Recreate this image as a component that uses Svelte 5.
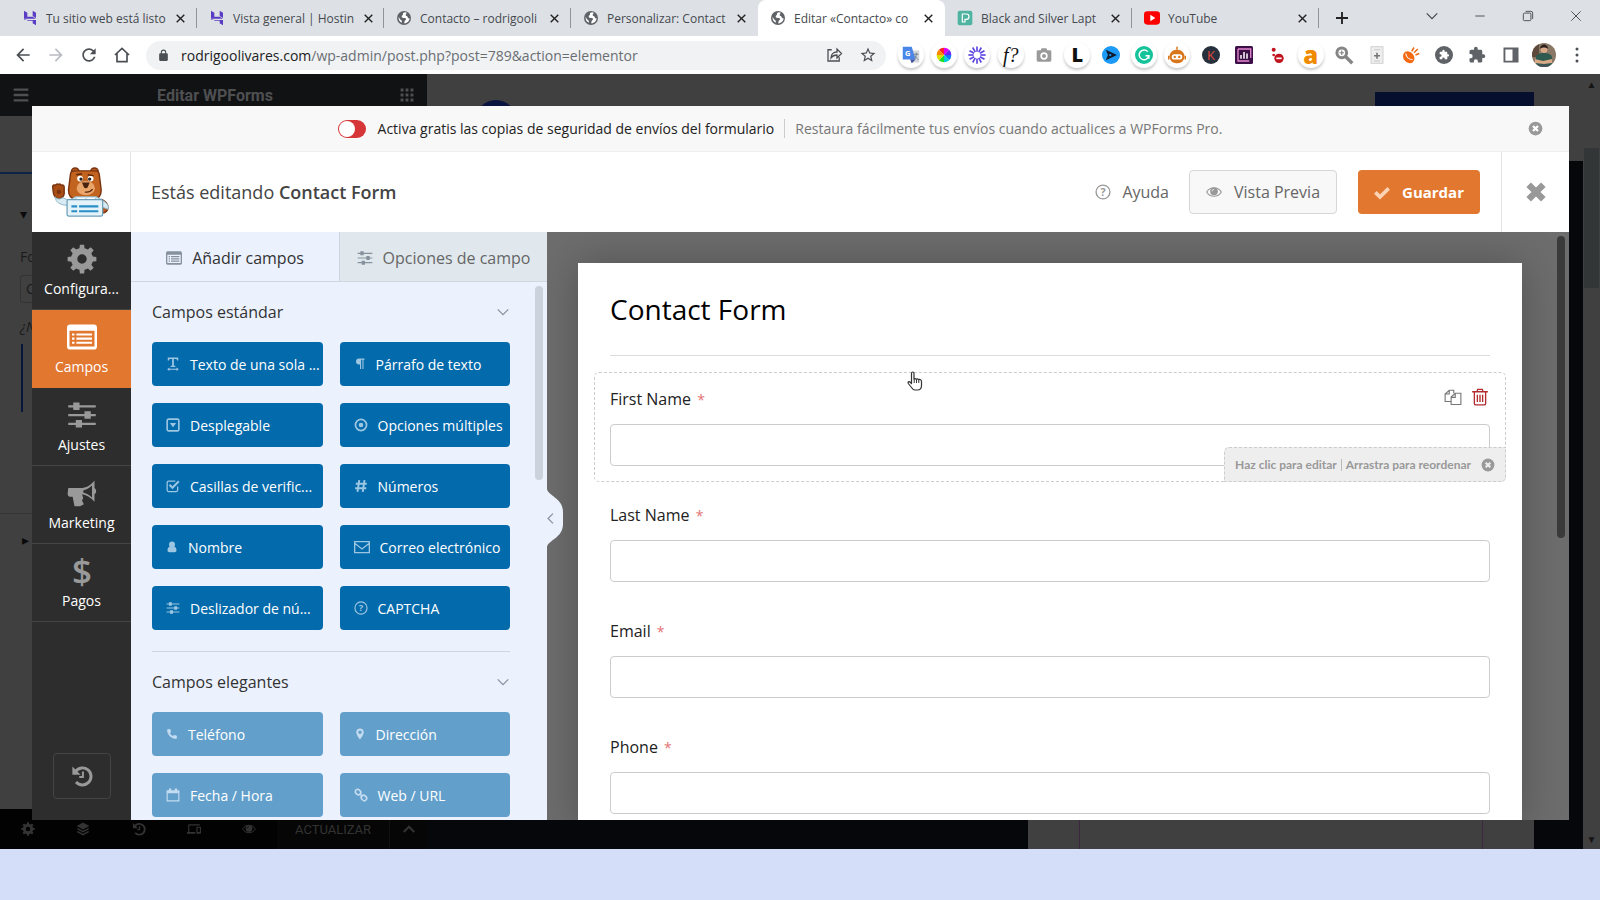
<!--
  Browser window with the Elementor editor in the back and the WPForms builder open on top
-->
<script>
  const spokes = (n, shape) =>
    Array.from({ length: n }, (_, i) => `<g transform="rotate(${(360 / n) * i} 12 12)">${shape}</g>`).join("");

  const sliders =
    '<path d="M1 5h22M1 12h22M1 19h22" stroke="currentColor" stroke-width="1.8"/><path d="M5 2h5v6H5zM14 9h5v6h-5zM7 16h5v6H7z"/>';
  const badgeClose =
    '<circle cx="12" cy="12" r="11"/><path d="M8 8l8 8M16 8l-8 8" stroke="var(--hole)" stroke-width="3.6"/>';
  const help =
    '<circle cx="12" cy="12" r="10.4" fill="none" stroke="currentColor" stroke-width="2"/><text x="12" y="17.5" text-anchor="middle" font-size="16" font-weight="700">?</text>';

  const icons = {
    hostinger:
      '<path fill="#5b3cc4" d="M3 1l5 3v6h8l5 3H3zM16 1l5 3v8l-5-3zM3 15h18v8l-5-3v-4H8v4l-5 3zM3 14v9l5-3v-5z"/>',
    globe:
      '<circle cx="12" cy="12" r="10.5"/><path fill="var(--hole)" d="M14 3.500c-3 0-4 1.500-3.500 3 .5 1.500-2 1.500-2 3.500s3 1.500 5 2 2 2.500.5 3.500-1 3-2 4.500c5 .5 8-3.500 8.500-7.500-1.500.5-3-.5-3-2s-3-1-3-3 1.500-2 1.500-3.500zM4 10c-.8 4 1.500 7.500 4.500 9.200.5-1.700.5-3-1-4.200S5 12.500 4 10z"/>',
    pexels:
      '<rect x="1" y="1" width="22" height="22" rx="3" fill="#4fb3a1"/><path d="M8 6h6a4 4 0 0 1 0 8h-2v4H8z" fill="none" stroke="#fff" stroke-width="1.800"/>',
    youtube: '<rect x="0" y="2" width="24" height="20" rx="5" fill="#f00"/><path fill="#fff" d="M9.500 7l7.500 5-7.500 5z"/>',
    close: '<path d="M5 5l14 14M19 5L5 19" fill="none" stroke="currentColor" stroke-width="2.600"/>',
    thinClose: '<path d="M4 4l16 16M20 4L4 20" fill="none" stroke="currentColor" stroke-width="1.600"/>',
    fatClose: '<path d="M4 4l16 16M20 4L4 20" fill="none" stroke="currentColor" stroke-width="7"/>',
    plus: '<path d="M12 3v18M3 12h18" fill="none" stroke="currentColor" stroke-width="2.800"/>',
    minus: '<path d="M4 12h16" fill="none" stroke="currentColor" stroke-width="1.600"/>',
    restore:
      '<rect x="4" y="7" width="13" height="13" rx="2" fill="none" stroke="currentColor" stroke-width="1.600"/><path d="M8 4h9a3 3 0 0 1 3 3v10" fill="none" stroke="currentColor" stroke-width="1.600"/>',
    down: '<path d="M3 7.500l9 9 9-9" fill="none" stroke="currentColor" stroke-width="2"/>',
    up: '<path d="M3 17l9-9 9 9" fill="none" stroke="currentColor" stroke-width="3.500"/>',
    left: '<path d="M16.500 3l-9 9 9 9" fill="none" stroke="currentColor" stroke-width="2.200"/>',
    back: '<path d="M20 11H7.830l5.590-5.590L12 4l-8 8 8 8 1.410-1.410L7.830 13H20z"/>',
    forward: '<path d="M12 4l-1.410 1.410L16.170 11H4v2h12.170l-5.580 5.590L12 20l8-8z"/>',
    reload:
      '<path d="M17.650 6.350C16.200 4.900 14.210 4 12 4c-4.420 0-7.990 3.580-7.990 8s3.570 8 7.990 8c3.730 0 6.840-2.550 7.730-6h-2.080c-.82 2.330-3.040 4-5.650 4-3.310 0-6-2.690-6-6s2.690-6 6-6c1.660 0 3.140.69 4.220 1.780L13 11h7V4z"/>',
    home: '<path d="M3.500 12L12 4l8.500 8M6 10v10h12V10" fill="none" stroke="currentColor" stroke-width="2"/>',
    lock:
      '<path fill-rule="evenodd" d="M18 8h-1V6A5 5 0 0 0 7 6v2H6a2 2 0 0 0-2 2v10c0 1.100.9 2 2 2h12a2 2 0 0 0 2-2V10a2 2 0 0 0-2-2zM9 8V6a3 3 0 0 1 6 0v2z"/>',
    share:
      '<path d="M9 5H4v15h15v-5M8 16c0-5 3-8 8-8V4l6 6-6 6v-4c-4 0-6 1-8 4z" fill="none" stroke="currentColor" stroke-width="1.700"/>',
    star:
      '<path d="M22 9.240l-7.190-.62L12 2 9.190 8.630 2 9.240l5.460 4.730L5.820 21 12 17.270 18.180 21l-1.630-7.030zM12 15.400l-3.760 2.270 1-4.280-3.320-2.880 4.380-.38L12 6.100l1.710 4.040 4.380.38-3.320 2.880 1 4.280z"/>',
    translate:
      '<path d="M9 6h14v16H12z" fill="#d3d5d8"/><path d="M1 1h12l5 17H1z" fill="#4a86e8"/><path d="M11 18h7l-5 5z" fill="#3c50a8"/><text x="4" y="13" font-size="10" font-weight="700" fill="#fff">G</text><path d="M16 11h6M19 9v2c0 3-1 5-3 7M17 13c1 2 3 4 5 5" fill="none" stroke="#6b7d90" stroke-width="1.200"/>',
    wheel:
      '<g stroke="none"><path fill="#f22" d="M12 12V1a11 11 0 0 0-7.800 3.200z"/><path fill="#d0f" d="M12 12V1a11 11 0 0 1 7.800 3.200z"/><path fill="#62f" d="M12 12l7.800-7.800A11 11 0 0 1 23 12z"/><path fill="#17f" d="M12 12h11a11 11 0 0 1-3.200 7.800z"/><path fill="#0cd" d="M12 12l7.800 7.800A11 11 0 0 1 12 23z"/><path fill="#2d2" d="M12 12v11a11 11 0 0 1-7.800-3.200z"/><path fill="#dd0" d="M12 12l-7.800 7.800A11 11 0 0 1 1 12z"/><path fill="#f80" d="M12 12H1a11 11 0 0 1 3.200-7.800z"/></g>',
    burst: spokes(12, '<path d="M12 .500v7" stroke="#5a45e0" stroke-width="2.200"/>'),
    camera:
      '<path fill="#9a9a9a" fill-rule="evenodd" d="M8.500 2L7 5H3a2 2 0 0 0-2 2v13a2 2 0 0 0 2 2h18a2 2 0 0 0 2-2V7a2 2 0 0 0-2-2h-4l-1.500-3zM12 8a5.500 5.500 0 1 1 0 11 5.500 5.500 0 0 1 0-11z"/><circle cx="12" cy="13.500" r="3" fill="#9a9a9a"/>',
    play: '<circle cx="12" cy="12" r="12" fill="#1b9af7"/><path d="M5 5l15 7-15 7 3-7z" fill="#111a2b"/><circle cx="11" cy="12" r="1.500" fill="#1b9af7"/>',
    grammar:
      '<circle cx="12" cy="12" r="12" fill="#15c39a"/><path d="M17 7.500A6.500 6.500 0 1 0 18.500 13h-4.500M18.500 17v-4" fill="none" stroke="#fff" stroke-width="2"/>',
    robot:
      '<path d="M11 1h2v4h-2zM0 13h2v5H0zM22 13h2v5h-2z" fill="#d9761c"/><rect x="2" y="5" width="20" height="18" rx="9" fill="#d9761c"/><rect x="5" y="11" width="14" height="7" rx="3.500" fill="#fff"/><circle cx="9" cy="14.500" r="1.600" fill="#d9761c"/><circle cx="15" cy="14.500" r="1.600" fill="#d9761c"/>',
    kDisc: '<circle cx="12" cy="12" r="12" fill="#27303d"/><text x="12" y="18" text-anchor="middle" font-size="17" fill="#e0483c">K</text>',
    stats:
      '<rect width="24" height="24" rx="2" fill="#3c0f46"/><path d="M4 4h17v12M4 4v16h15" fill="none" stroke="#e58bd0" stroke-width="1.800"/><path d="M8 17v-5M12 17V8M16 17v-7" stroke="#fff" stroke-width="2"/>',
    blocked:
      '<circle cx="7" cy="4" r="3" fill="#c1121f"/><circle cx="7" cy="12" r="2" fill="#c1121f"/><circle cx="15" cy="17" r="7" fill="#c1121f"/><path d="M11 17h8" stroke="#fff" stroke-width="2.500"/>',
    zoom:
      '<circle cx="9" cy="9" r="6.500" fill="none" stroke="#858585" stroke-width="4"/><path d="M14 14l9 9" stroke="#858585" stroke-width="4.500"/><path d="M9 6v6M6 9h6" stroke="#858585" stroke-width="1.600"/>',
    page:
      '<rect x="4" y="1" width="16" height="22" fill="#eee" stroke="#c4c4c4"/><path d="M12 9v8M8 13h8" stroke="#777" stroke-width="2.200"/><path d="M8 5h8M8 20h8" stroke="#bbb"/>',
    meteor:
      '<ellipse cx="9" cy="15" rx="7" ry="8.500" transform="rotate(-40 9 15)" fill="#f26a13"/><path d="M5 10c1 6 5 8 9 8" stroke="#fff" fill="none" stroke-width="1.400"/><path d="M13 7l3-5M16 9l5-5M18 12l5-2" stroke="#f26a13" stroke-width="2"/>',
    discPuzzle:
      '<circle cx="12" cy="12" r="12" fill="#5f6368"/><path transform="translate(5 4.500) scale(.6)" fill="#fff" d="M20.500 11H19V7c0-1.100-.9-2-2-2h-4V3.500a2.500 2.500 0 0 0-5 0V5H4a2 2 0 0 0-2 2v3.800h1.500a2.700 2.700 0 0 1 0 5.400H2V20c0 1.100.9 2 2 2h3.800v-1.500a2.700 2.700 0 0 1 5.400 0V22H17a2 2 0 0 0 2-2v-4h1.500a2.500 2.500 0 0 0 0-5z"/>',
    puzzle:
      '<path fill="#5f6368" d="M20.500 11H19V7c0-1.100-.9-2-2-2h-4V3.500a2.500 2.500 0 0 0-5 0V5H4a2 2 0 0 0-2 2v3.800h1.500a2.700 2.700 0 0 1 0 5.400H2V20c0 1.100.9 2 2 2h3.800v-1.500a2.700 2.700 0 0 1 5.400 0V22H17a2 2 0 0 0 2-2v-4h1.500a2.500 2.500 0 0 0 0-5z"/>',
    sidePanel: '<path fill="#5f6368" fill-rule="evenodd" d="M2 2h20v20H2zM4.500 4.500v15H14v-15z"/>',
    dots: '<circle cx="12" cy="4" r="2"/><circle cx="12" cy="12" r="2"/><circle cx="12" cy="20" r="2"/>',
    menu: '<path d="M1 4h22M1 12h22M1 20h22" stroke="currentColor" stroke-width="3.500"/>',
    apps: '<path d="M1 1h5v5H1zM9.500 1h5v5h-5zM18 1h5v5h-5zM1 9.500h5v5H1zM9.500 9.500h5v5h-5zM18 9.500h5v5h-5zM1 18h5v5H1zM9.500 18h5v5h-5zM18 18h5v5h-5z"/>',
    gear: `<circle cx="12" cy="12" r="6.300" fill="none" stroke="currentColor" stroke-width="5"/>${spokes(8, '<path d="M9.800 5L10.300.500h3.400l.5 4.500z"/>')}`,
    form:
      '<path fill-rule="evenodd" d="M2.500 2h19A2.500 2.500 0 0 1 24 4.500v15a2.500 2.500 0 0 1-2.500 2.500h-19A2.500 2.500 0 0 1 0 19.500v-15A2.500 2.500 0 0 1 2.500 2zM2 7v12.500h20V7z"/><path d="M4 10h2M4 13.300h2M4 16.600h2M7.500 10H20M7.500 13.300H20M7.500 16.600H20" stroke="currentColor" stroke-width="1.700"/>',
    sliders,
    help,
    badgeClose,
    horn:
      '<path fill-rule="evenodd" d="M1 8h10c4 0 8-2 11-6v6a3 3 0 0 1 0 5v6c-3-3.500-7-5.500-10-6l1 3-1 2 1.500 3-3 1.500H6L4.500 15H3a2.500 2.500 0 0 1-2.500-2.500zM20 6c-2 2-5 3.500-7 4v1.500c2 .5 5 2 7 4z"/>',
    dollar: '<text x="12" y="22" text-anchor="middle" font-size="28" font-weight="600">$</text>',
    history:
      '<path d="M5 7a9.300 9.300 0 1 1 .5 11.500" fill="none" stroke="currentColor" stroke-width="3.200"/><path d="M1.500 1.500v9h9z"/><path d="M13 7v6H9" fill="none" stroke="currentColor" stroke-width="2.200"/>',
    check: '<path d="M2 12.500l7 7L22 6.500" fill="none" stroke="currentColor" stroke-width="5.500"/>',
    eye:
      '<path d="M1 12c5-8.500 17-8.500 22 0-5 8.500-17 8.500-22 0z" fill="none" stroke="currentColor" stroke-width="1.700"/><circle cx="12" cy="11" r="5.800"/><path d="M9 11a3 3 0 0 1 3-3" stroke="var(--hole)" fill="none"/>',
    text: '<path d="M3 1h18v5h-2l-1-2.500h-4.500V15H16v2H8v-2h2.500V3.500H6L5 6H3zM3 21h18" /><path d="M4 21h16" stroke="currentColor" stroke-width="1.800"/><path d="M2 21l4-3v6zM22 21l-4-3v6z"/>',
    paragraph: '<path d="M10 1h11v2.500h-2V22h-2.200V3.500h-2.600V22H12v-9h-2a6 6 0 0 1 0-12z"/>',
    dropdown:
      '<rect x="2" y="2" width="20" height="20" rx="2.500" fill="none" stroke="currentColor" stroke-width="2.800"/><path d="M6.500 8.500h11L12 16z"/>',
    radio: '<circle cx="12" cy="12" r="9.500" fill="none" stroke="currentColor" stroke-width="3"/><circle cx="12" cy="12" r="4"/>',
    checkbox:
      '<path d="M20 13v6a2.500 2.500 0 0 1-2.500 2.500h-13A2.500 2.500 0 0 1 2 19V6a2.500 2.500 0 0 1 2.500-2.500H16" fill="none" stroke="currentColor" stroke-width="2.200"/><path d="M6 10l5 5L22 4" fill="none" stroke="currentColor" stroke-width="3.600"/>',
    hash: '<path d="M9 2L6 22M18 2l-3 20M3 8h19M2 16h19" fill="none" stroke="currentColor" stroke-width="3.400"/>',
    user: '<circle cx="12" cy="7" r="6"/><path d="M3 19c0-5 2-7.500 5-8 2.500 2 5.500 2 8 0 3 .5 5 3 5 8a3.500 3.500 0 0 1-3.500 3.500h-11A3.500 3.500 0 0 1 3 19z"/>',
    mail: '<path d="M1 4h22v16.500H1zM1 6.500l11 8.500L23 6.500" fill="none" stroke="currentColor" stroke-width="2"/>',
    phone:
      '<path d="M20 15.400c-1.200 0-2.400-.2-3.500-.6-.4-.1-.8 0-1 .3L13.900 17C11 15.700 8.400 13.100 7 10.200l2-1.700c.2-.2.300-.6.200-1-.4-1.100-.6-2.300-.6-3.500 0-.5-.4-1-1-1H4.200C3.600 3 3 3.200 3 4c0 9.300 7.700 17 17 17 .7 0 1-.6 1-1.200v-3.400c0-.6-.4-1-1-1z" stroke="currentColor" stroke-width="1.500"/>',
    pin: '<path fill-rule="evenodd" d="M12 1C7.700 1 4.500 4.200 4.500 8.500 4.500 14 12 23 12 23s7.500-9 7.500-14.500C19.500 4.200 16.300 1 12 1zm0 11a3.500 3.500 0 1 1 0-7 3.500 3.500 0 0 1 0 7z"/>',
    calendar: '<path d="M2 5h20v17H2z" fill="none" stroke="currentColor" stroke-width="2"/><path d="M2 5h20v4H2zM5 1h4v5H5zM15 1h4v5h-4z"/>',
    link:
      '<g fill="none" stroke="currentColor" stroke-width="2.800"><rect x="2" y="3" width="10" height="8" rx="4" transform="rotate(45 7 7)"/><rect x="12" y="13" width="10" height="8" rx="4" transform="rotate(45 17 17)"/><path d="M9.500 9.500l5 5"/></g>',
    copy: '<path d="M9 18H1.500V8L7 3h6v4M7 3v5H1.500M9.500 12L15 7h7.500v15h-13zM15 7v5.500H9.500" fill="none" stroke="currentColor" stroke-width="1.500"/>',
    trash:
      '<path d="M1.500 5h21M8 5l1-3.200h6L16 5M4.500 5v15.500a2 2 0 0 0 2 2h11a2 2 0 0 0 2-2V5M8.500 9v9.500M12 9v9.500M15.500 9v9.500" fill="none" stroke="currentColor" stroke-width="1.800"/>',
    layers: '<path d="M12 1L1 7l11 6 11-6zM3.500 10.500L1 12l11 6 11-6-2.500-1.500L12 15zM3.500 15.500L1 17l11 6 11-6-2.500-1.500L12 20z"/>',
    devices:
      '<path fill-rule="evenodd" d="M4 6h18V4H4a2 2 0 0 0-2 2v11H0v3h14v-3H4zM23 8h-6a1 1 0 0 0-1 1v10c0 .6.400 1 1 1h6c.6 0 1-.4 1-1V9c0-.6-.4-1-1-1zm-1 9h-4v-7h4z"/>',
  };

  const tabs = [
    { icon: "hostinger", title: "Tu sitio web está listo" },
    { icon: "hostinger", title: "Vista general | Hostin" },
    { icon: "globe", title: "Contacto – rodrigooli" },
    { icon: "globe", title: "Personalizar: Contact" },
    { icon: "globe", title: "Editar «Contacto» co", active: true },
    { icon: "pexels", title: "Black and Silver Lapt" },
    { icon: "youtube", title: "YouTube" },
  ];

  const extensions = [
    { icon: "translate", pill: true },
    { icon: "wheel", pill: true, small: true },
    { icon: "burst", pill: true },
    { glyph: "f?", kind: "script", pill: true },
    { icon: "camera", small: true },
    { glyph: "L", kind: "heavy", pill: true },
    { icon: "play" },
    { icon: "grammar", pill: true },
    { icon: "robot", pill: true },
    { icon: "kDisc" },
    { icon: "stats" },
    { icon: "blocked", small: true },
    { glyph: "a", kind: "orange", pill: true },
    { icon: "zoom" },
    { icon: "page" },
    { icon: "meteor" },
    { icon: "discPuzzle" },
    { icon: "puzzle" },
    { icon: "sidePanel" },
    { avatar: true },
    { icon: "dots" },
  ];

  const sections = [
    { icon: "gear", label: "Configura..." },
    { icon: "form", label: "Campos" },
    { icon: "sliders", label: "Ajustes" },
    { icon: "horn", label: "Marketing" },
    { icon: "dollar", label: "Pagos" },
  ];
  let section = $state("Campos");

  const groups = [
    {
      title: "Campos estándar",
      fields: [
        ["text", "Texto de una sola ..."],
        ["paragraph", "Párrafo de texto"],
        ["dropdown", "Desplegable"],
        ["radio", "Opciones múltiples"],
        ["checkbox", "Casillas de verific..."],
        ["hash", "Números"],
        ["user", "Nombre"],
        ["mail", "Correo electrónico"],
        ["sliders", "Deslizador de nú..."],
        ["help", "CAPTCHA"],
      ],
    },
    {
      title: "Campos elegantes",
      pro: true,
      fields: [
        ["phone", "Teléfono"],
        ["pin", "Dirección"],
        ["calendar", "Fecha / Hora"],
        ["link", "Web / URL"],
      ],
    },
  ];

  const formFields = ["First Name", "Last Name", "Email", "Phone"];
  let hovered = $state("First Name");
  let backups = $state(false);
</script>

{#snippet icon(name)}
  <svg class="icon icon--{name}" viewBox="0 0 24 24" fill="currentColor" aria-hidden="true">{@html icons[name]}</svg>
{/snippet}

<div class="browser">
  <div class="tabs">
    {#each tabs as tab}
      <div class="tab" class:tab--active={tab.active}>
        {@render icon(tab.icon)}
        <span class="tab__title">{tab.title}</span>
        <button class="tab__close" aria-label="Cerrar pestaña">{@render icon("close")}</button>
      </div>
    {/each}
    <button class="tabs__new" aria-label="Nueva pestaña">{@render icon("plus")}</button>
    <div class="window">
      {#each ["down", "minus", "restore", "thinClose"] as name}
        <button aria-label={name}>{@render icon(name)}</button>
      {/each}
    </div>
  </div>

  <div class="toolbar">
    <div class="toolbar__nav">
      <button aria-label="Atrás">{@render icon("back")}</button>
      <button class="muted" aria-label="Adelante">{@render icon("forward")}</button>
      <button aria-label="Recargar">{@render icon("reload")}</button>
      <button aria-label="Inicio">{@render icon("home")}</button>
    </div>
    <div class="address">
      {@render icon("lock")}
      <span class="address__url"><b>rodrigoolivares.com</b>/wp-admin/post.php?post=789&amp;action=elementor</span>
      {@render icon("share")}
      {@render icon("star")}
    </div>
    <div class="extensions">
      {#each extensions as ext}
        <button class="ext" class:ext--pill={ext.pill} class:ext--small={ext.small} aria-label="Extensión">
          {#if ext.glyph}
            <span class="glyph glyph--{ext.kind}">{ext.glyph}</span>
          {:else if ext.avatar}
            <svg class="avatar" viewBox="0 0 24 24" aria-hidden="true">
              <clipPath id="face"><circle cx="12" cy="12" r="12" /></clipPath>
              <g clip-path="url(#face)">
                <path fill="#8b7765" d="M0 0h24v24H0z" />
                <path fill="#5d4a3d" d="M0 0h7v14H0z" />
                <path fill="#2f5a50" d="M4 24V14c1-3 4-4 8-4s7 1 8 4v10z" />
                <path fill="#d9a988" d="M3 16l8 2 9-2v4l-8 1-9-1z" />
                <circle cx="12" cy="6.500" r="3.500" fill="#d9a988" />
                <path fill="#2b211c" d="M8 6c0-6 8-6 8 0-2-2-6-2-8 0z" />
                <path fill="#4a4f5c" d="M3 22h18v2H3z" />
              </g>
            </svg>
          {:else}
            {@render icon(ext.icon)}
          {/if}
        </button>
      {/each}
    </div>
  </div>

  <div class="viewport">
    <aside class="editor">
      <div class="editor__head">
        {@render icon("menu")}
        <span>Editar WPForms</span>
        {@render icon("apps")}
      </div>
      <div class="editor__body">
        <div class="editor__tabline"></div>
        <span class="editor__caret">▾</span>
        <span class="editor__label">Fo</span>
        <div class="editor__select">C</div>
        <i class="editor__hint">¿N</i>
        <div class="editor__note"></div>
        <span class="editor__caret editor__caret--closed">▸</span>
      </div>
      <div class="editor__foot">
        {#each ["gear", "layers", "history", "devices", "eye"] as name}
          <button aria-label={name}>{@render icon(name)}</button>
        {/each}
        <button class="editor__update">ACTUALIZAR</button>
        <button class="editor__more" aria-label="Más opciones">{@render icon("up")}</button>
      </div>
    </aside>
    <div class="site">
      <div class="site__head">
        <span class="site__logo"></span>
        <span class="site__cta"></span>
      </div>
      <div class="site__body"><div class="site__card"><div></div></div></div>
    </div>
    <div class="page-scroll">
      <span>▲</span>
      <div class="page-scroll__thumb"></div>
      <span>▼</span>
    </div>

    <div class="builder">
      <div class="banner">
        <label class="switch">
          <input type="checkbox" bind:checked={backups} />
          <span class="switch__track"></span>
          <span class="banner__lead">Activa gratis las copias de seguridad de envíos del formulario</span>
        </label>
        <span class="banner__more">Restaura fácilmente tus envíos cuando actualices a WPForms Pro.</span>
        <button class="banner__close" aria-label="Descartar">{@render icon("badgeClose")}</button>
      </div>

      <header class="header">
        <div class="header__logo">
          <svg viewBox="0 0 60 52" aria-hidden="true">
            <g stroke="#7a3410" stroke-width="1.500">
              <circle cx="24" cy="5" r="4" fill="#b8581c" />
              <circle cx="44" cy="5" r="4" fill="#b8581c" />
              <path fill="#c2631f" d="M19 8q0-4 5-4h20q5 0 5 4l2 16q0 9-8 10H25q-8-1-8-10z" />
              <path fill="#a84d16" d="M1 25l-.500-5q1-2 3-1 1-2 3-1 2-1 3 1 3-1 3 2v7q-1 5-6 5-5-1-5.500-8z" />
              <path fill="#b8581c" d="M52 34q6 3 6 8t-6 6z" />
            </g>
            <path fill="#d9ebf2" stroke="#8fb8c9" d="M3 31q3 4 8 1l7 3 6-4h22l7 4q7 4 5 9l-5-2-8 6H17v-8Q4 40 3 31z" />
            <circle cx="29" cy="12" r="3" fill="#fff" />
            <circle cx="40" cy="12" r="3" fill="#fff" />
            <circle cx="30" cy="12.500" r="1.700" fill="#222" />
            <circle cx="39" cy="12.500" r="1.700" fill="#222" />
            <path fill="none" stroke="#5b2409" stroke-width="1.500" d="M25 8l6-1M37 8l6 1" />
            <ellipse cx="35" cy="22" rx="9.500" ry="7.500" fill="#e9a56a" />
            <path fill="#4a2210" d="M31 16h8l-2 5q-2 2-4 0z" />
            <path fill="none" stroke="#5b2409" stroke-width="1.200" d="M34 26q5 1 8-3" />
            <path fill="#7a3410" d="M5 25q2-3 4 0 1 3-2 3t-2-3z" />
            <path fill="#fff" stroke="#8fb8c9" d="M24 32l5 5 6-4 6 4 5-5" />
            <rect x="15.500" y="34" width="37" height="17" rx="1.500" fill="#e4f3fa" stroke="#6d9fb8" stroke-width="1.300" />
            <path stroke="#2b8fc7" stroke-width="2.200" d="M20 41h6M20 46h6M28 41h20M28 46h20" />
          </svg>
        </div>
        <h1 class="header__title">Estás editando <b>Contact Form</b></h1>
        <button class="header__help">{@render icon("help")}Ayuda</button>
        <button class="btn btn--light">{@render icon("eye")}Vista Previa</button>
        <button class="btn btn--save">{@render icon("check")}Guardar</button>
        <button class="header__exit" aria-label="Cerrar">{@render icon("fatClose")}</button>
      </header>

      <div class="workspace">
        <nav class="sections">
          {#each sections as item}
            <button class="section" class:section--active={section === item.label} onclick={() => (section = item.label)}>
              {@render icon(item.icon)}
              {item.label}
            </button>
          {/each}
          <button class="revisions" aria-label="Revisiones">{@render icon("history")}</button>
        </nav>

        <div class="panel">
          <div class="panel__tabs">
            <button class="panel__tab panel__tab--active">{@render icon("form")}Añadir campos</button>
            <button class="panel__tab">{@render icon("sliders")}Opciones de campo</button>
          </div>
          <div class="panel__body">
            <div class="groups">
              {#each groups as group}
                <section class="group" class:group--pro={group.pro}>
                  <h2>{group.title}{@render icon("down")}</h2>
                  <div class="group__fields">
                    {#each group.fields as [name, label]}
                      <button class="field-btn">{@render icon(name)}{label}</button>
                    {/each}
                  </div>
                </section>
              {/each}
            </div>
            <div class="panel__thumb"></div>
          </div>
          <button class="panel__toggle" aria-label="Ocultar panel">
            <svg class="panel__bump" viewBox="0 0 16 58" aria-hidden="true">
              <path fill="#ebf1fd" d="M0 0c1 7 16 9 16 23v12c0 14-15 16-16 23z" />
            </svg>
            {@render icon("left")}
          </button>
        </div>

        <main class="preview">
          <div class="form">
            <h2 class="form__title">Contact Form</h2>
            {#each formFields as name, i}
              <!-- svelte-ignore a11y_no_static_element_interactions -->
              <div class="field" class:field--hover={hovered === name} onmouseenter={() => (hovered = name)}>
                <div class="field__top">
                  <label for="field-{i}">{name} <span class="required">*</span></label>
                  {#if hovered === name}
                    <button class="field__copy" aria-label="Duplicar">{@render icon("copy")}</button>
                    <button class="field__trash" aria-label="Borrar">{@render icon("trash")}</button>
                  {/if}
                </div>
                <input id="field-{i}" type="text" readonly />
                {#if hovered === name}
                  <div class="hint">
                    <span>Haz clic para editar</span>
                    <span class="hint__next">Arrastra para reordenar</span>
                    {@render icon("badgeClose")}
                  </div>
                {/if}
              </div>
            {/each}
            <svg class="pointer" viewBox="0 0 16 20" aria-hidden="true">
              <path
                fill="#fff"
                stroke="#333"
                stroke-width="1.200"
                stroke-linejoin="round"
                d="M4.500 12V2.500q0-1.500 1.200-1.500T7 2.500V8q1.200-.8 2.300.2 1.200-.8 2.300.4 1.200-.6 2 .2.900.5.900 1.700v4q0 4.500-4 4.500H8q-2 0-3.500-2.500L1.300 12.500q-.6-1.500.6-1.800 1.300 0 2.600 2z"
              />
              <path stroke="#333" d="M7.200 8v4M9.500 8.500V12M11.800 9v3" />
            </svg>
          </div>
          <div class="preview__thumb"></div>
        </main>
      </div>
    </div>
  </div>
</div>

<style>
  :global(body) {
    margin: 0;
    background: #d4def8;
    font-family: "Open Sans", "Noto Sans", sans-serif;
  }

  .browser {
    height: 100vh;
    min-height: 600px;
    box-sizing: border-box;
    padding-bottom: 51px;
    display: flex;
    flex-direction: column;
    overflow: hidden;
  }

  .browser :global(*) {
    box-sizing: border-box;
  }

  button {
    display: flex;
    align-items: center;
    justify-content: center;
    padding: 0;
    border: 0;
    background: none;
    color: inherit;
    font: inherit;
    white-space: nowrap;
    cursor: pointer;
  }

  h1,
  h2 {
    margin: 0;
    font-weight: 400;
  }

  .icon {
    flex: none;
    width: 16px;
    height: 16px;
    overflow: visible;
    --hole: #fff;
  }

  /* tab strip */
  .tabs {
    flex: none;
    display: flex;
    height: 36px;
    padding-left: 10px;
    background: #dde1e6;
    color: #45494e;
  }

  .tab {
    flex: 0 1 187px;
    display: flex;
    align-items: center;
    gap: 8px;
    min-width: 0;
    padding: 0 10px 0 12px;
    position: relative;
    font-size: 12px;
    --hole: #dde1e6;
  }

  .tab::after {
    content: "";
    position: absolute;
    right: 0;
    width: 1px;
    height: 20px;
    background: #8f959c;
  }

  .tab--active {
    background: #fff;
    border-radius: 8px 8px 0 0;
  }

  .tab--active::after,
  .tab:has(+ .tab--active)::after {
    display: none;
  }

  .tab__title {
    flex: 1;
    white-space: nowrap;
  }

  .tab .icon--globe {
    color: #5f6368;
  }

  .tab__close .icon {
    width: 13px;
    height: 13px;
    color: #222;
  }

  .tabs__new {
    width: 46px;
    color: #222;
  }

  .window {
    display: flex;
    margin-left: auto;
  }

  .window button {
    width: 48px;
    height: 32px;
  }

  .window .icon {
    width: 14px;
    height: 14px;
  }

  /* toolbar */
  .toolbar {
    flex: none;
    display: flex;
    align-items: center;
    height: 38px;
    padding: 0 6px;
    background: #fff;
    color: #4b4f54;
  }

  .toolbar__nav {
    display: flex;
    padding-right: 8px;
  }

  .toolbar__nav button {
    width: 33px;
  }

  .toolbar__nav .icon {
    width: 20px;
    height: 20px;
  }

  .toolbar .muted {
    color: #b9bcc0;
  }

  .address {
    flex: 1;
    display: flex;
    align-items: center;
    gap: 16px;
    height: 29px;
    padding: 0 9px 0 11px;
    border-radius: 15px;
    background: #f0f2f4;
    font-size: 14px;
  }

  .address__url {
    flex: 1;
    margin-left: -5px;
    white-space: nowrap;
    color: #6a6e73;
  }

  .address b {
    font-weight: 400;
    color: #222;
  }

  .address .icon {
    width: 18px;
    height: 18px;
  }

  .address .icon--lock {
    width: 13px;
    height: 13px;
  }

  .extensions {
    display: grid;
    grid-template-columns: repeat(21, 1fr);
    width: 700px;
    margin-left: 8px;
    justify-items: center;
  }

  .ext {
    width: 26px;
    height: 26px;
    border-radius: 50%;
  }

  .ext--pill {
    box-shadow: 0 2px 3px rgba(0, 0, 0, 0.22);
  }

  .ext .icon {
    width: 18px;
    height: 18px;
  }

  .ext--small .icon {
    width: 16px;
    height: 16px;
  }

  .avatar {
    width: 24px;
    height: 24px;
  }

  .glyph {
    font-size: 20px;
    line-height: 24px;
    color: #111;
  }

  .glyph--script {
    font-family: "Liberation Serif", serif;
    font-style: italic;
  }

  .glyph--heavy {
    font-weight: 800;
  }

  .glyph--orange {
    font-size: 24px;
    font-weight: 800;
    color: #f08a00;
  }

  /* dimmed editor behind the builder */
  .viewport {
    flex: 1;
    display: flex;
    min-height: 0;
    position: relative;
    background: #404040;
  }

  .editor {
    flex: none;
    display: flex;
    flex-direction: column;
    width: 427px;
  }

  .editor__head {
    display: flex;
    align-items: center;
    justify-content: space-between;
    height: 42px;
    padding: 0 13px 0 12px;
    background: #111214;
    color: #4e4f51;
    font-family: Roboto, sans-serif;
    font-size: 16px;
    font-weight: 700;
  }

  .editor__head .icon {
    width: 18px;
  }

  .editor__head .icon--apps {
    width: 14px;
  }

  .editor__body {
    flex: 1;
    display: flex;
    flex-direction: column;
    min-height: 0;
    padding-left: 20px;
    color: #1a1a1a;
    font-size: 14px;
    line-height: 20px;
  }

  .editor__tabline {
    height: 58px;
    margin-left: -20px;
    border-bottom: 2px solid #0b2347;
  }

  .editor__caret {
    margin-top: 30px;
    color: #0a0a0a;
  }

  .editor__label {
    margin-top: 23px;
  }

  .editor__select {
    height: 28px;
    margin: 8px 0 14px;
    padding: 3px 5px;
    border: 1px solid #333;
    border-radius: 3px;
  }

  .editor__note {
    height: 68px;
    margin: 7px 0 101px 1px;
    border-left: 2px solid #06173a;
  }

  .editor__caret--closed {
    margin: 0 0 0 -20px;
    padding: 16px 0 0 22px;
    border-top: 1px solid #353535;
  }

  .editor__foot {
    display: flex;
    height: 40px;
    background: #020202;
    color: #333;
    font-family: Roboto, sans-serif;
    font-size: 13px;
  }

  .editor__foot button {
    flex: 1;
  }

  .editor__foot .icon {
    width: 14px;
    height: 14px;
    --hole: #020202;
  }

  .editor__foot .editor__update {
    flex: none;
    width: 112px;
    background: #060606;
  }

  .editor__foot .editor__more {
    flex: none;
    width: 38px;
    border-left: 1px solid #111;
    background: #060606;
  }

  .site {
    flex: 1;
    display: flex;
    flex-direction: column;
  }

  .site__head {
    display: flex;
    justify-content: space-between;
    height: 87px;
    padding: 18px 49px 0;
  }

  .site__logo {
    width: 40px;
    height: 40px;
    margin-top: 8px;
    border-radius: 50%;
    background: #0a1440;
  }

  .site__cta {
    width: 159px;
    height: 40px;
    background: #060f2e;
  }

  .site__body {
    flex: 1;
    display: flex;
    justify-content: flex-end;
    padding-right: 49px;
    background: #05070a;
  }

  .site__card {
    display: flex;
    width: 506px;
    padding: 0 51px;
    background: #404040;
  }

  .site__card div {
    flex: 1;
    border: 1px solid #3b2840;
    border-width: 0 1px;
  }

  .page-scroll {
    display: flex;
    flex-direction: column;
    align-items: center;
    width: 17px;
    background: #404040;
    color: #151515;
    font-size: 10px;
    line-height: 20px;
  }

  .page-scroll__thumb {
    width: 15px;
    height: 18%;
    margin: 54px 0 auto;
    background: #333636;
  }

  /* builder window */
  .builder {
    position: absolute;
    inset: 32px 31px 29px 32px;
    display: flex;
    flex-direction: column;
    overflow: hidden;
    background: #fff;
    color: #444;
  }

  .banner {
    flex: none;
    display: flex;
    align-items: center;
    justify-content: center;
    height: 46px;
    padding-right: 26px;
    border-bottom: 1px solid #eee;
    background: #f8f8f8;
    font-size: 14px;
  }

  .switch {
    display: flex;
    align-items: center;
    margin-left: auto;
    cursor: pointer;
  }

  .switch input {
    position: absolute;
    opacity: 0;
  }

  .switch__track {
    width: 28px;
    height: 18px;
    margin-right: 12px;
    padding: 1px;
    border-radius: 9px;
    background: #d63638;
  }

  .switch__track::before {
    content: "";
    display: block;
    width: 16px;
    height: 16px;
    border-radius: 50%;
    background: #fff;
  }

  .switch input:checked + .switch__track {
    padding-left: 11px;
    background: #3a9b4c;
  }

  .banner__lead {
    font-weight: 500;
    color: #222;
  }

  .banner__more {
    margin: 0 auto 0 10px;
    padding-left: 10px;
    border-left: 1px solid #ccc;
    color: #777;
  }

  .banner__close .icon {
    width: 15px;
    height: 15px;
    color: #999;
  }

  .header {
    flex: none;
    display: flex;
    align-items: center;
    height: 80px;
  }

  .header__logo {
    display: grid;
    place-items: center;
    width: 99px;
    height: 100%;
    border-right: 1px solid #e4e4e4;
  }

  .header__logo svg {
    width: 60px;
    height: 50px;
  }

  .header__title {
    flex: 1;
    padding-left: 20px;
    font-size: 18px;
  }

  .header__title b {
    font-weight: 600;
    color: #444;
  }

  .header__help {
    gap: 11px;
    margin-right: 20px;
    color: #666;
    font-size: 16px;
  }

  .header__help .icon {
    color: #999;
  }

  .btn {
    gap: 12px;
    height: 44px;
    margin-right: 21px;
    padding: 0 16px;
    border-radius: 4px;
    font-size: 16px;
    font-weight: 500;
  }

  .btn--light {
    border: 1px solid #d6d6d6;
    background: #f8f8f8;
    color: #666;
  }

  .btn--light .icon {
    color: #999;
  }

  .btn--save {
    background: #e27730;
    color: #fff;
    font-size: 15px;
    font-weight: 700;
  }

  .btn--save .icon {
    color: #fbd3b6;
  }

  .header__exit {
    width: 68px;
    height: 100%;
    border-left: 1px solid #e4e4e4;
    color: #999;
  }

  .header__exit .icon {
    width: 22px;
    height: 22px;
  }

  .workspace {
    flex: 1;
    display: flex;
    min-height: 0;
  }

  .sections {
    flex: none;
    display: flex;
    flex-direction: column;
    width: 99px;
    background: #2d2d2d;
    color: #fff;
  }

  .section {
    flex-direction: column;
    gap: 5px;
    height: 78px;
    padding-top: 2px;
    border-bottom: 1px solid #444;
    font-size: 14px;
    line-height: 20px;
  }

  .section .icon {
    width: 30px;
    height: 30px;
    color: #999;
  }

  .section--active {
    border-color: #e27730;
    background: #e27730;
  }

  .section--active .icon {
    width: 34px;
    color: #fff;
  }

  .revisions {
    width: 58px;
    height: 46px;
    margin: auto auto 21px;
    border: 1px solid #444;
    border-radius: 4px;
    color: #999;
  }

  .revisions .icon {
    width: 22px;
    height: 22px;
  }

  .panel {
    flex: none;
    display: flex;
    flex-direction: column;
    width: 416px;
    position: relative;
    background: #ebf1fd;
  }

  .panel__tabs {
    flex: none;
    display: grid;
    grid-template-columns: 1fr 1fr;
    height: 50px;
    font-size: 16px;
  }

  .panel__tab {
    gap: 10px;
    padding-top: 2px;
    border: 1px solid #ced7e0;
    border-width: 0 0 1px 1px;
    background: #e0e8ee;
    color: #666;
  }

  .panel__tab .icon {
    --hole: #ebf1fd;
    color: #86919e;
  }

  .panel__tab--active {
    border-left: 0;
    background: #ebf1fd;
    color: #333;
    font-weight: 500;
  }

  .panel__body {
    flex: 1;
    display: flex;
    justify-content: space-between;
    min-height: 0;
    padding: 0 4px 0 21px;
    overflow: hidden;
  }

  .groups {
    width: 358px;
  }

  .group h2 {
    display: flex;
    align-items: center;
    justify-content: space-between;
    height: 60px;
    color: #333;
    font-size: 16px;
    font-weight: 500;
  }

  .group h2 .icon {
    width: 14px;
    height: 14px;
    color: #86919e;
  }

  .group__fields {
    display: grid;
    grid-template-columns: 1fr 1fr;
    gap: 17px;
    padding-bottom: 21px;
    border-bottom: 1px solid #ced7e0;
  }

  .field-btn {
    justify-content: flex-start;
    gap: 10px;
    height: 44px;
    padding-left: 14px;
    border-radius: 4px;
    background: #036aab;
    color: #fff;
    font-size: 14px;
  }

  .field-btn .icon {
    width: 14px;
    height: 14px;
    color: #9cc6e2;
  }

  .field-btn .icon--paragraph,
  .field-btn .icon--user,
  .field-btn .icon--phone,
  .field-btn .icon--pin {
    width: 12px;
    height: 16px;
  }

  .field-btn .icon--mail {
    width: 16px;
    height: 16px;
  }

  .group--pro .field-btn {
    background: #639fcb;
  }

  .group--pro .field-btn .icon {
    color: #c3dcf0;
  }

  .panel__thumb {
    width: 8px;
    height: 194px;
    margin-top: 4px;
    border-radius: 4px;
    background: #cbd2db;
  }

  .panel__toggle {
    position: absolute;
    z-index: 1;
    left: 100%;
    bottom: 273px;
    width: 16px;
    height: 58px;
  }

  .panel__bump {
    position: absolute;
    inset: 0;
  }

  .panel__toggle .icon {
    position: relative;
    right: 5px;
    width: 13px;
    height: 13px;
    color: #86919e;
  }

  .preview {
    flex: 1;
    min-width: 0;
    position: relative;
    padding: 31px 47px 0 31px;
    background: #6d6d6d;
    overflow: hidden;
  }

  .preview__thumb {
    position: absolute;
    top: 4px;
    right: 4px;
    width: 8px;
    height: 302px;
    border-radius: 4px;
    background: #3a3a3a;
  }

  .form {
    min-height: 100%;
    padding: 0 16px;
    position: relative;
    background: #fff;
    box-shadow: 0 0 40px rgba(0, 0, 0, 0.25);
  }

  .form__title {
    height: 93px;
    margin: 0 16px 16px;
    padding-top: 26px;
    border-bottom: 1px solid #ddd;
    color: #000;
    font-size: 28px;
    font-weight: 500;
    line-height: 40px;
  }

  .field {
    height: 110px;
    margin-bottom: 6px;
    padding: 0 15px;
    position: relative;
    border: 1px dashed transparent;
    border-radius: 5px;
  }

  .field--hover {
    border-color: #ccc;
  }

  .field__top {
    display: flex;
    align-items: center;
    gap: 9px;
    height: 51px;
    padding-right: 1px;
  }

  .field__top button {
    padding-bottom: 3px;
  }

  .field label {
    flex: 1;
    color: #222;
    font-size: 16px;
    font-weight: 500;
  }

  .required {
    color: #d63638;
    font-size: 14px;
    font-weight: 400;
    opacity: 0.7;
    padding-left: 2px;
  }

  .field__top .icon {
    width: 18px;
    height: 18px;
  }

  .field__copy {
    color: #777;
  }

  .field__trash {
    color: #b32d2e;
  }

  .field input {
    display: block;
    width: 100%;
    height: 42px;
    border: 1px solid #ccc;
    border-radius: 4px;
    background: #fff;
  }

  .hint {
    position: absolute;
    right: -1px;
    bottom: -1px;
    display: flex;
    align-items: center;
    height: 35px;
    padding: 0 10px;
    border: 1px dashed #ccc;
    border-radius: 5px 0 5px 0;
    background: #eee;
    color: #999;
    font-family: Lato, sans-serif;
    font-size: 12px;
    font-weight: 700;
    line-height: 12px;
  }

  .hint__next {
    margin: 0 10px 0 4px;
    padding-left: 4px;
    border-left: 1px solid #bbb;
  }

  .hint .icon {
    width: 14px;
    height: 14px;
    --hole: #eee;
  }

  .pointer {
    position: absolute;
    top: 108px;
    left: 329px;
    width: 16px;
    height: 20px;
  }
</style>
